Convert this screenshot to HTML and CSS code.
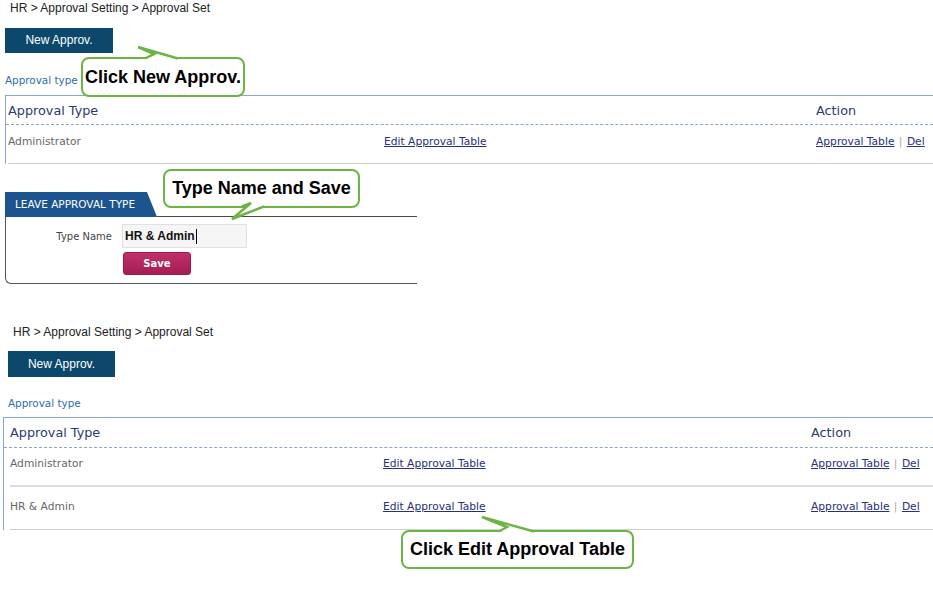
FILE: index.html
```html
<!DOCTYPE html>
<html>
<head>
<meta charset="utf-8">
<link rel="stylesheet" href="styles.css">
</head>
<body>
<section class="shot shot-a">
  <div class="crumb">HR &gt; Approval Setting &gt; Approval Set</div>
  <div class="btn-new">New Approv.</div>
  <div class="sub">Approval type</div>
  <div class="grid">
    <div class="row head"><span>Approval Type</span><span></span><span>Action</span></div>
    <div class="row item last"><span class="name">Administrator</span><a>Edit Approval Table</a><span class="act"><a>Approval Table</a> <i>|</i> <a>Del</a></span></div>
  </div>
</section>

<section class="form">
  <div class="tabbar"><div class="tab">Leave Approval Type</div><div class="tabfill"></div></div>
  <div class="fbody">
    <div class="frow"><label>Type Name</label><div class="input">HR &amp; Admin<span class="caret"></span></div></div>
    <div class="frow"><span class="lblspace"></span><div class="save">Save</div></div>
  </div>
</section>

<section class="shot shot-b">
  <div class="crumb">HR &gt; Approval Setting &gt; Approval Set</div>
  <div class="btn-new">New Approv.</div>
  <div class="sub">Approval type</div>
  <div class="grid">
    <div class="row head"><span>Approval Type</span><span></span><span>Action</span></div>
    <div class="row item mid"><span class="name">Administrator</span><a>Edit Approval Table</a><span class="act"><a>Approval Table</a> <i>|</i> <a>Del</a></span></div>
    <div class="row item last"><span class="name">HR &amp; Admin</span><a>Edit Approval Table</a><span class="act"><a>Approval Table</a> <i>|</i> <a>Del</a></span></div>
  </div>
</section>

<div class="callout c1">Click New Approv.</div>
<div class="callout c2">Type Name and Save</div>
<div class="callout c3">Click Edit Approval Table</div>

<svg class="tails" width="933" height="600" viewBox="0 0 933 600">
  <polygon points="145,59 154,54 138,47 178,59" fill="#fff"/>
  <polyline points="145,58.5 154,54 138,47 178,58.5" fill="none" stroke="#6cb545" stroke-width="2.5" stroke-linejoin="miter"/>
  <polygon points="242,206 251,203 232,219 264,206" fill="#fff"/>
  <polyline points="242,206.5 251,203 232,219 264,206.5" fill="none" stroke="#6cb545" stroke-width="2.5"/>
  <polygon points="499,532 507,527 482,517 534,532" fill="#fff"/>
  <polyline points="499,531.5 507,527 482,517 534,531.5" fill="none" stroke="#6cb545" stroke-width="2.5"/>
</svg>
</body>
</html>
```

FILE: styles.css
```css
html, body {
  margin: 0;
  padding: 0;
  background: #fff;
  width: 933px;
  height: 600px;
  overflow: hidden;
  position: relative;
  font-family: "DejaVu Sans", Verdana, sans-serif;
}

.shot { display: flow-root; }

.crumb {
  font-family: "Liberation Sans", Arial, sans-serif;
  font-size: 12px;
  line-height: 16px;
  height: 16px;
  color: #222;
}

.btn-new {
  background: #0c486b;
  color: #fff;
  font-family: "Liberation Sans", Arial, sans-serif;
  font-size: 12px;
  text-align: center;
}

.sub {
  font-size: 10.4px;
  line-height: 14px;
  color: #2f6ea8;
}

.grid {
  border-top: 1px solid #86a8c9;
  border-left: 1px solid #86a8c9;
}

.row {
  display: grid;
  align-items: start;
}

.head {
  font-size: 12.8px;
  color: #2d3a70;
  border-bottom: 1px dashed #8aa6c4;
}

.item {
  font-size: 10.7px;
  color: #666;
}

.item a, .act a {
  color: #27307e;
  text-decoration: underline;
}

.act i {
  font-style: normal;
  color: #aaa;
  padding: 0 1px;
}

/* first screenshot */
.shot-a .crumb { margin: 0 0 0 10px; }
.shot-a .btn-new { margin: 12px 0 0 5px; width: 108px; height: 25px; line-height: 25px; }
.shot-a .sub { margin: 20px 0 0 5px; }
.shot-a .grid { margin: 8px 0 0 5px; }
.shot-a .row { grid-template-columns: 376px 432px auto; padding-left: 2px; }
.shot-a .head { height: 28px; line-height: 30px; }
.shot-a .item { height: 39px; padding-top: 10px; box-sizing: border-box; line-height: 14px; margin-left: 2px; padding-left: 0; }
.shot-a .item.last { border-bottom: 1px solid #cfcfcf; }

/* form */
.form {
  margin: 28px 0 0 5px;
  width: 412px;
}
.tabbar { display: flex; align-items: stretch; }
.tab {
  width: 152px;
  height: 25px;
  line-height: 25px;
  padding-left: 10px;
  box-sizing: border-box;
  background: #1b548f;
  color: #fff;
  font-size: 10.5px;
  text-transform: uppercase;
  clip-path: polygon(0 0, 142px 0, 100% 100%, 0 100%);
}
.tabfill { flex: 1; border-bottom: 1px solid #4a4a4a; }
.fbody {
  border-left: 1px solid #555;
  border-bottom: 1px solid #555;
  border-bottom-left-radius: 6px;
  height: 67px;
  box-sizing: border-box;
  padding-top: 7px;
}
.frow { display: flex; align-items: center; }
.frow label, .lblspace {
  width: 106px;
  text-align: right;
  font-size: 10px;
  color: #444;
  margin-right: 10px;
  flex: none;
}
.input {
  width: 125px;
  height: 24px;
  box-sizing: border-box;
  background: #f6f6f6;
  border: 1px solid #e0e0e0;
  font-family: "Liberation Sans", Arial, sans-serif;
  font-size: 12px;
  font-weight: bold;
  color: #111;
  line-height: 22px;
  padding-left: 2px;
  display: flex;
  align-items: center;
}
.caret {
  display: inline-block;
  width: 1px;
  height: 15px;
  background: #000;
  margin-left: 1px;
}
.save {
  margin-top: 4px;
  margin-left: 1px;
  width: 68px;
  height: 23px;
  line-height: 21px;
  text-align: center;
  color: #fff;
  font-size: 10px;
  font-weight: bold;
  border-radius: 3px;
  background: linear-gradient(#c0306b, #a51d55);
  border: 1px solid #9a1a4e;
  box-sizing: border-box;
}

/* second screenshot */
.shot-b { margin-top: 40px; }
.shot-b .crumb { margin: 0 0 0 13px; }
.shot-b .btn-new { margin: 11px 0 0 8px; width: 107px; height: 26px; line-height: 26px; }
.shot-b .sub { margin: 19px 0 0 8px; }
.shot-b .grid { margin: 7px 0 0 3px; }
.shot-b .row { grid-template-columns: 373px 428px auto; padding-left: 6px; }
.shot-b .head { height: 29px; line-height: 29px; }
.shot-b .item { line-height: 14px; box-sizing: border-box; margin-left: 6px; padding-left: 0; }
.shot-b .item.mid { height: 39px; padding-top: 9px; border-bottom: 2px solid #dcdcdc; }
.shot-b .item.last { height: 43px; padding-top: 13px; border-bottom: 1px solid #cfcfcf; }

/* callouts */
.callout {
  position: absolute;
  box-sizing: border-box;
  border: 2.5px solid #6cb545;
  border-radius: 8px;
  background: #fff;
  font-family: "Liberation Sans", Arial, sans-serif;
  font-weight: bold;
  font-size: 18px;
  color: #000;
  display: flex;
  align-items: center;
  justify-content: center;
}
.c1 { left: 81px; top: 57px; width: 164px; height: 40px; }
.c2 { left: 163px; top: 169px; width: 197px; height: 39px; }
.c3 { left: 401px; top: 530px; width: 233px; height: 39px; }

.tails {
  position: absolute;
  left: 0;
  top: 0;
  pointer-events: none;
}
```
